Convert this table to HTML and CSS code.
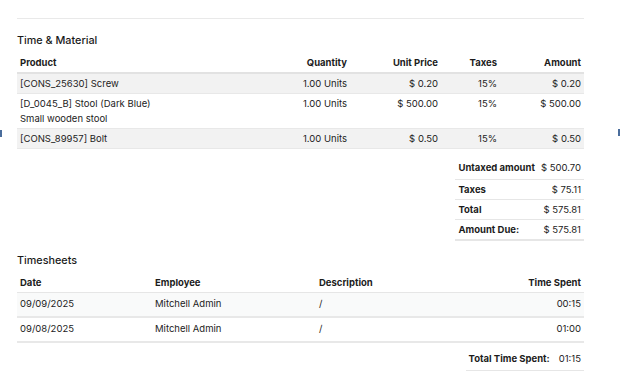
FILE: index.html
```html
<!DOCTYPE html>
<html lang="en">
<head>
    <meta charset="UTF-8">
    <meta name="viewport" content="width=device-width, initial-scale=1.0">
    <title>Invoice</title>
    <link rel="stylesheet" href="styles.css">
</head>
<body>
    <span class="edge-mark left"></span>
    <span class="edge-mark right"></span>
    <div class="page">
        <hr class="top-rule">

        <h3 class="section-title">Time &amp; Material</h3>
        <table class="lines">
            <thead>
                <tr>
                    <th class="col-product">Product</th>
                    <th class="num col-qty">Quantity</th>
                    <th class="num col-price">Unit Price</th>
                    <th class="num col-tax">Taxes</th>
                    <th class="num col-amount">Amount</th>
                </tr>
            </thead>
            <tbody>
                <tr class="striped">
                    <td>[CONS_25630] Screw</td>
                    <td class="num">1.00 Units</td>
                    <td class="num">$ 0.20</td>
                    <td class="num">15%</td>
                    <td class="num">$ 0.20</td>
                </tr>
                <tr>
                    <td>[D_0045_B] Stool (Dark Blue)<br>Small wooden stool</td>
                    <td class="num">1.00 Units</td>
                    <td class="num">$ 500.00</td>
                    <td class="num">15%</td>
                    <td class="num">$ 500.00</td>
                </tr>
                <tr class="striped">
                    <td>[CONS_89957] Bolt</td>
                    <td class="num">1.00 Units</td>
                    <td class="num">$ 0.50</td>
                    <td class="num">15%</td>
                    <td class="num">$ 0.50</td>
                </tr>
            </tbody>
        </table>

        <div class="totals-wrap">
            <table class="totals">
                <tr><th>Untaxed amount</th><td>$ 500.70</td></tr>
                <tr><th>Taxes</th><td>$ 75.11</td></tr>
                <tr><th>Total</th><td>$ 575.81</td></tr>
                <tr><th>Amount Due:</th><td>$ 575.81</td></tr>
            </table>
        </div>

        <h3 class="section-title timesheet-title">Timesheets</h3>
        <table class="sheets">
            <thead>
                <tr>
                    <th class="col-date">Date</th>
                    <th class="col-employee">Employee</th>
                    <th>Description</th>
                    <th class="num">Time Spent</th>
                </tr>
            </thead>
            <tbody>
                <tr class="light">
                    <td>09/09/2025</td>
                    <td>Mitchell Admin</td>
                    <td>/</td>
                    <td class="num">00:15</td>
                </tr>
                <tr>
                    <td>09/08/2025</td>
                    <td>Mitchell Admin</td>
                    <td>/</td>
                    <td class="num">01:00</td>
                </tr>
            </tbody>
        </table>

        <div class="totals-wrap time-wrap">
            <table class="totals time-total">
                <tr><th>Total Time Spent:</th><td>01:15</td></tr>
            </table>
        </div>
    </div>
</body>
</html>
```

FILE: styles.css
```css
body {
    font-family: 'Inter', 'Liberation Sans', sans-serif;
    font-size: 9.5px;
    color: #1c1c1c;
    background-color: #fff;
    margin: 0;
    padding: 0;
}
.page {
    width: 567px;
    margin-left: 17px;
    padding-top: 18px;
}
.top-rule {
    border: none;
    border-top: 1px solid #e9e9e9;
    margin: 0;
}
.section-title {
    font-size: 10.8px;
    line-height: 14px;
    font-weight: 500;
    color: #1a1a1a;
    margin: 15px 0 5px 0;
}
.timesheet-title {
    margin-top: 13px;
}
table {
    border-collapse: collapse;
    width: 100%;
}
th {
    font-weight: 700;
    text-align: left;
}
.num {
    text-align: right;
}
th, td {
    line-height: 14px;
    padding: 3px;
}

/* product lines */
.lines thead th {
    padding-bottom: 2px;
    border-bottom: 2px solid #e2e2e2;
}
.lines tbody td {
    line-height: 15px;
    padding-top: 2px;
    padding-bottom: 2px;
    vertical-align: top;
    border-bottom: 1px solid #e8e8e8;
}
.lines .striped td {
    background-color: #f2f2f2;
}
.col-qty { width: 74px; }
.col-price { width: 85px; }
.col-tax { width: 53px; }
.col-amount { width: 78px; }

/* totals */
.totals-wrap {
    display: flex;
    justify-content: flex-end;
    margin-top: 10px;
}
.totals {
    width: 128px;
}
.totals th, .totals td {
    padding: 3px 3px 2px 3px;
    border-bottom: 1px solid #e6e6e6;
    white-space: nowrap;
}
.totals tr:first-child th,
.totals tr:first-child td {
    padding-top: 2px;
    padding-bottom: 4px;
}
.totals td {
    text-align: right;
}
.totals tr:last-child th,
.totals tr:last-child td {
    border-bottom: 2px solid #e6e6e6;
}

/* timesheets */
.sheets thead th {
    padding-bottom: 2px;
    border-bottom: 1px solid #e6e6e6;
}
.sheets tbody td {
    padding-top: 4px;
    padding-bottom: 5px;
    border-bottom: 2px solid #e8e8e8;
}
.sheets .light td {
    background-color: #f9fafa;
}
.col-date { width: 129px; }
.col-employee { width: 158px; }

.time-wrap {
    margin-top: 5px;
}
.time-total {
    width: 114px;
}
.time-total th {
    padding-right: 6px;
}
.time-total tr:last-child th,
.time-total tr:last-child td {
    padding-top: 4px;
    padding-bottom: 4px;
    border-bottom: 1px solid #e6e6e6;
}

.edge-mark {
    position: absolute;
    top: 130px;
    width: 2px;
    height: 7px;
    background-color: #4a6d9c;
}
.edge-mark.left { left: 0; }
.edge-mark.right { right: 0; top: 129px; }
```
